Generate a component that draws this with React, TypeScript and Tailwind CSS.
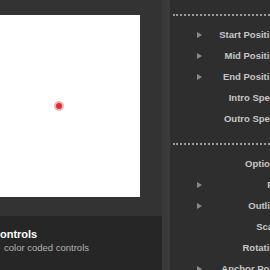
import React from "react";

const font = { fontFamily: '"Liberation Sans", Arial, Helvetica, sans-serif' };

function Tri() {
  return (
    <svg width="5" height="6" viewBox="0 0 5 6" className="block">
      <polygon points="0,0 5,3 0,6" fill="#8a8a8a" />
    </svg>
  );
}

function Row({ label, arrow }: { label: string; arrow?: boolean }) {
  return (
    <div className="flex h-[21px] items-center pl-[27px]">
      <div className="w-[5px] flex-none">{arrow ? <Tri /> : null}</div>
      <div className="flex-1 text-right text-[9.5px] font-bold leading-none text-[#c6c6c6] whitespace-nowrap">
        {label}
      </div>
    </div>
  );
}

function Dots() {
  return <div className="ml-[3px] h-[2px] border-t-2 border-dotted border-[#9a9a9a]" />;
}

export default function App() {
  return (
    <div className="flex h-[270px] w-[270px] overflow-hidden bg-[#2e2e2e]" style={font}>
      <div className="flex w-[162px] flex-none flex-col">
        <div className="h-[216px] flex-none bg-[#333333] pt-[15px]">
          <div className="relative h-[182px] w-[140px] bg-white">
            <div className="absolute left-[54px] top-[86px] flex h-[10px] w-[10px] items-center justify-center rounded-full bg-[#f0b4b4]">
              <div className="h-[6px] w-[6px] rounded-full bg-[#d63434]" />
            </div>
          </div>
        </div>
        <div className="flex-1 overflow-hidden bg-[#262626] pt-[11px]">
          <div className="ml-[-8px] text-[11px] font-bold leading-[14px] text-white whitespace-nowrap">Controls</div>
          <div className="ml-[4px] mt-[1px] text-[9.5px] leading-[12px] text-[#b4b4b4] whitespace-nowrap">color coded controls</div>
        </div>
      </div>
      <div className="w-[8px] flex-none bg-[#3a3a3a]" />
      <div className="flex-1 overflow-hidden bg-[#2e2e2e] pt-[14px]">
        <div className="w-[111px]">
          <Dots />
          <div className="mt-[8px]">
            <Row label="Start Position" arrow />
            <Row label="Mid Position" arrow />
            <Row label="End Position" arrow />
            <Row label="Intro Speed" />
            <Row label="Outro Speed" />
          </div>
          <div className="mt-[14px]">
            <Dots />
          </div>
          <div className="mt-[8px]">
            <Row label="Options" />
            <Row label="Fill" arrow />
            <Row label="Outline" arrow />
            <Row label="Scale" />
            <Row label="Rotation" />
            <Row label="Anchor Point" arrow />
          </div>
        </div>
      </div>
    </div>
  );
}
